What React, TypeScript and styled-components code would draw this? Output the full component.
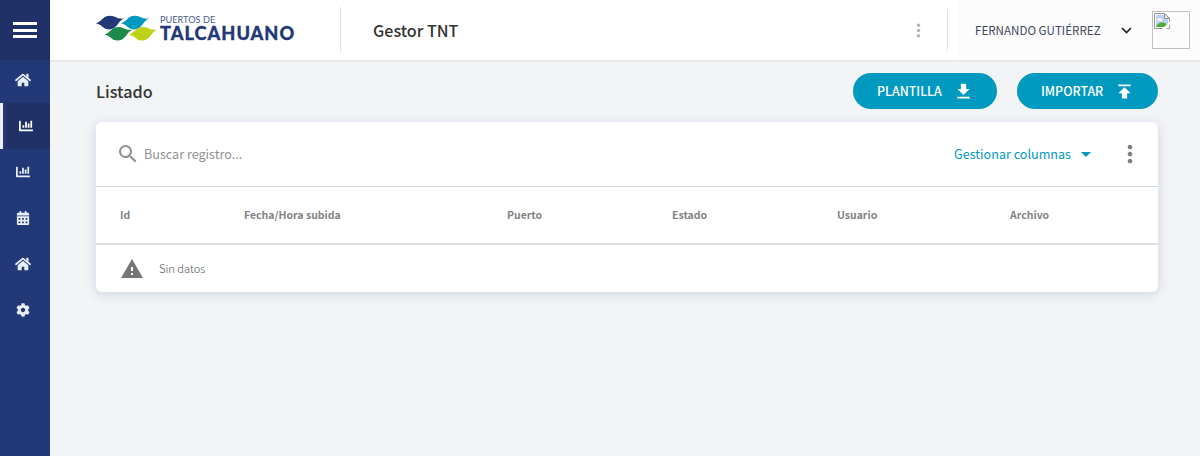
import React from "react";
import styled, { createGlobalStyle } from "styled-components";
import { FaHome, FaChartBar, FaCalendarAlt, FaCog } from "react-icons/fa";
import {
  MdMoreVert,
  MdSearch,
  MdWarning,
  MdArrowDropDown,
  MdGetApp,
  MdPublish,
} from "react-icons/md";

const GlobalStyle = createGlobalStyle`
  *, *::before, *::after { box-sizing: border-box; }
  body {
    margin: 0;
    background: #f3f4f6;
    color: #333;
    font-family: "Noto Sans CJK SC", "Noto Sans", sans-serif;
  }
`;

const Layout = styled.div`
  display: flex;
  height: 100vh;
  overflow: hidden;
`;

const Sidebar = styled.nav`
  flex: 0 0 50px;
  background: #233876;
`;

const MenuToggle = styled.button`
  display: flex;
  flex-direction: column;
  align-items: center;
  justify-content: center;
  gap: 3.5px;
  width: 50px;
  height: 60px;
  padding: 0;
  border: 0;
  background: #203167;
`;

const ToggleBar = styled.span`
  width: 24px;
  height: 3px;
  background: #fff;
`;

const NavList = styled.div`
  display: flex;
  flex-direction: column;
`;

const NavItem = styled.a<{ $active?: boolean; $first?: boolean; $size: number }>`
  display: flex;
  align-items: center;
  justify-content: center;
  height: ${(p) => (p.$first ? 43 : 46)}px;
  padding-bottom: ${(p) => (p.$first ? 3 : 0)}px;
  padding-left: ${(p) => (p.$active ? 2 : 0)}px;
  padding-right: ${(p) => (p.$active ? 0 : 4)}px;
  color: ${(p) => (p.$active ? "#fff" : "#e9eefc")};
  font-size: ${(p) => p.$size}px;
  box-shadow: ${(p) => (p.$active ? "inset 3px 0 #eaf0ff, inset 6px 0 #233876" : "none")};
  background: ${(p) => (p.$active ? "#203167" : "transparent")};
`;

const Page = styled.div`
  flex: 1;
  display: flex;
  flex-direction: column;
`;

const Header = styled.header`
  display: flex;
  align-items: center;
  height: 60px;
  padding-left: 46px;
  background: #fff;
  box-shadow: 0 1px 2px rgba(30, 40, 70, 0.1);
`;

const Brand = styled.div`
  display: flex;
  width: 244px;
  height: 30px;
`;

const BrandMark = styled.svg`
  width: 61px;
  height: 30px;
`;

const BrandName = styled.div`
  display: flex;
  flex-direction: column;
  gap: 1px;
  margin-left: 3px;
  color: #233876;
  font-family: Lato, sans-serif;
  white-space: nowrap;
`;

const BrandTop = styled.span`
  font-size: 9.2px;
  line-height: 10px;
  color: #4c5c90;
`;

const BrandMain = styled.span`
  font-size: 18.2px;
  line-height: 15px;
  font-weight: 900;
  letter-spacing: 1px;
  -webkit-text-stroke: 0.3px #233876;
`;

const Divider = styled.span<{ $height: number }>`
  width: 1px;
  height: ${(p) => p.$height}px;
  background: #e3e4e7;
`;

const Title = styled.h1`
  flex: 1;
  margin: 0 0 0 32px;
  font-size: 16.1px;
  font-weight: 500;
  line-height: 24px;
`;

const HeaderMore = styled(MdMoreVert)`
  width: 21px;
  height: 21px;
  margin-right: 18px;
  color: #b5b5b5;
`;

const UserPanel = styled.div`
  display: flex;
  align-items: center;
  width: 242px;
  height: 60px;
  margin-left: 10px;
  padding: 0 10px 0 17px;
  background: #fcfcfc;
`;

const UserName = styled.span`
  flex: 1;
  color: #44485c;
  font-size: 11.6px;
  white-space: nowrap;
`;

const Chevron = styled.svg`
  width: 11px;
  height: 7px;
  margin-right: 20px;
`;

const Avatar = styled.div`
  width: 38px;
  height: 38px;
  padding: 1px;
  border: 1px solid #c0c0c0;
`;

const Main = styled.main`
  padding: 13px 42px 0 46px;
`;

const TitleBar = styled.div`
  display: flex;
  align-items: center;
  gap: 20px;
  height: 36px;
`;

const Subtitle = styled.h2`
  flex: 1;
  margin: 0;
  font-size: 16.2px;
  font-weight: 500;
  line-height: 24px;
`;

const PillButton = styled.button<{ $width: number }>`
  display: flex;
  align-items: center;
  justify-content: space-between;
  width: ${(p) => p.$width}px;
  height: 36px;
  padding: 0 23px 0 24px;
  border: 0;
  border-radius: 18px;
  background: #0099bf;
  color: #fff;
  font: 500 12.4px "Noto Sans CJK SC", "Noto Sans", sans-serif;

  svg {
    width: 21px;
    height: 21px;
  }
`;

const Card = styled.section`
  margin-top: 13px;
  border-radius: 6px;
  background: #fff;
  box-shadow: 0 2px 12px rgba(50, 80, 150, 0.2);
`;

const Toolbar = styled.div`
  display: flex;
  align-items: center;
  height: 65px;
  padding: 0 14px 0 20px;
  border-bottom: 1px solid #d5d8d8;
`;

const SearchIcon = styled(MdSearch)`
  width: 24px;
  height: 24px;
  color: #8f8f8f;
`;

const SearchText = styled.span`
  flex: 1;
  margin-left: 4px;
  padding-bottom: 2px;
  color: #919191;
  font-size: 12.6px;
`;

const ColumnsLink = styled.a`
  display: flex;
  align-items: center;
  color: #0099bf;
  font-size: 12.6px;

  svg {
    width: 24px;
    height: 24px;
    margin-left: 3px;
  }
`;

const ColumnsLabel = styled.span`
  padding-bottom: 2px;
`;

const CardMore = styled(MdMoreVert)`
  width: 28px;
  height: 28px;
  margin-left: 18px;
  color: #808080;
`;

const TableHead = styled.div`
  display: grid;
  grid-template-columns: 124px 263px 165px 165px 173px 1fr;
  align-items: center;
  height: 58px;
  padding: 0 0 2px 24px;
  border-bottom: 2px solid #e0e0e0;
`;

const HeadCell = styled.span`
  color: #838383;
  font-size: 10.5px;
  font-weight: 700;
`;

const EmptyRow = styled.div`
  display: flex;
  align-items: center;
  height: 47px;
  padding-left: 24px;
  color: #555;
  font-size: 11.1px;
  font-weight: 300;

  svg {
    width: 24px;
    height: 24px;
    margin-right: 15px;
    color: #757575;
  }
`;

const EmptyText = styled.span`
  padding-bottom: 2px;
`;

const columns = ["Id", "Fecha/Hora subida", "Puerto", "Estado", "Usuario", "Archivo"];

const navItems = [
  { Icon: FaHome, size: 16 },
  { Icon: FaChartBar, size: 14 },
  { Icon: FaChartBar, size: 14 },
  { Icon: FaCalendarAlt, size: 14 },
  { Icon: FaHome, size: 16 },
  { Icon: FaCog, size: 14 },
];

const wave =
  "M0 7.800C7 4.500 7 0 14 0C20 0 20.500 3.600 28 2.800C21.500 5.500 21.500 13.600 13 13.600C6 13.600 6.500 8.400 0 7.800Z";

export default function App() {
  return (
    <Layout>
      <GlobalStyle />
      <Sidebar>
        <MenuToggle aria-label="Menú">
          <ToggleBar />
          <ToggleBar />
          <ToggleBar />
        </MenuToggle>
        <NavList>
          {navItems.map(({ Icon, size }, i) => (
            <NavItem key={i} $active={i === 1} $first={i === 0} $size={size}>
              <Icon />
            </NavItem>
          ))}
        </NavList>
      </Sidebar>
      <Page>
        <Header>
          <Brand>
            <BrandMark viewBox="0 0 61 30">
              <path d={wave} fill="#233876" transform="translate(0 0.800)" />
              <path d={wave} fill="#0099bf" transform="translate(25 0.800)" />
              <path d={wave} fill="#1b8a4b" transform="translate(8.500 11.900)" />
              <path d={wave} fill="#bfd116" transform="translate(33 11.900)" />
            </BrandMark>
            <BrandName>
              <BrandTop>PUERTOS DE</BrandTop>
              <BrandMain>TALCAHUANO</BrandMain>
            </BrandName>
          </Brand>
          <Divider $height={46} />
          <Title>Gestor TNT</Title>
          <HeaderMore />
          <Divider $height={42} />
          <UserPanel>
            <UserName>FERNANDO GUTIÉRREZ</UserName>
            <Chevron viewBox="0 0 11 7">
              <path d="M1 1l4.500 4.500L10 1" fill="none" stroke="#222" strokeWidth="1.700" />
            </Chevron>
            <Avatar>
              <svg width="16" height="16" viewBox="0 0 16 16" display="block">
                <path d="M.5.5h10l5 5v10H.5z" fill="#fff" stroke="#9a9a9a" />
                <path d="M2 2h8v4h4v8H2z" fill="#bcd0f7" />
                <path d="M3 7c0-2 3-3 4-1 2 0 2 2 0 2H4z" fill="#fff" />
                <path d="M2 14c1-3 4-5 7-4.500 2 0 4 2 5 4.500z" fill="#4caf31" />
                <path d="M10.500.5v5h5z" fill="#eee" stroke="#8f8f8f" />
                <path d="M7.500 16.500L16.500 8v3L12 16.500z" fill="#fcfcfc" />
              </svg>
            </Avatar>
          </UserPanel>
        </Header>
        <Main>
          <TitleBar>
            <Subtitle>Listado</Subtitle>
            <PillButton $width={144}>
              <span>PLANTILLA</span>
              <MdGetApp />
            </PillButton>
            <PillButton $width={141}>
              <span>IMPORTAR</span>
              <MdPublish />
            </PillButton>
          </TitleBar>
          <Card>
            <Toolbar>
              <SearchIcon />
              <SearchText>Buscar registro...</SearchText>
              <ColumnsLink>
                <ColumnsLabel>Gestionar columnas</ColumnsLabel>
                <MdArrowDropDown />
              </ColumnsLink>
              <CardMore />
            </Toolbar>
            <TableHead>
              {columns.map((name) => (
                <HeadCell key={name}>{name}</HeadCell>
              ))}
            </TableHead>
            <EmptyRow>
              <MdWarning />
              <EmptyText>Sin datos</EmptyText>
            </EmptyRow>
          </Card>
        </Main>
      </Page>
    </Layout>
  );
}
